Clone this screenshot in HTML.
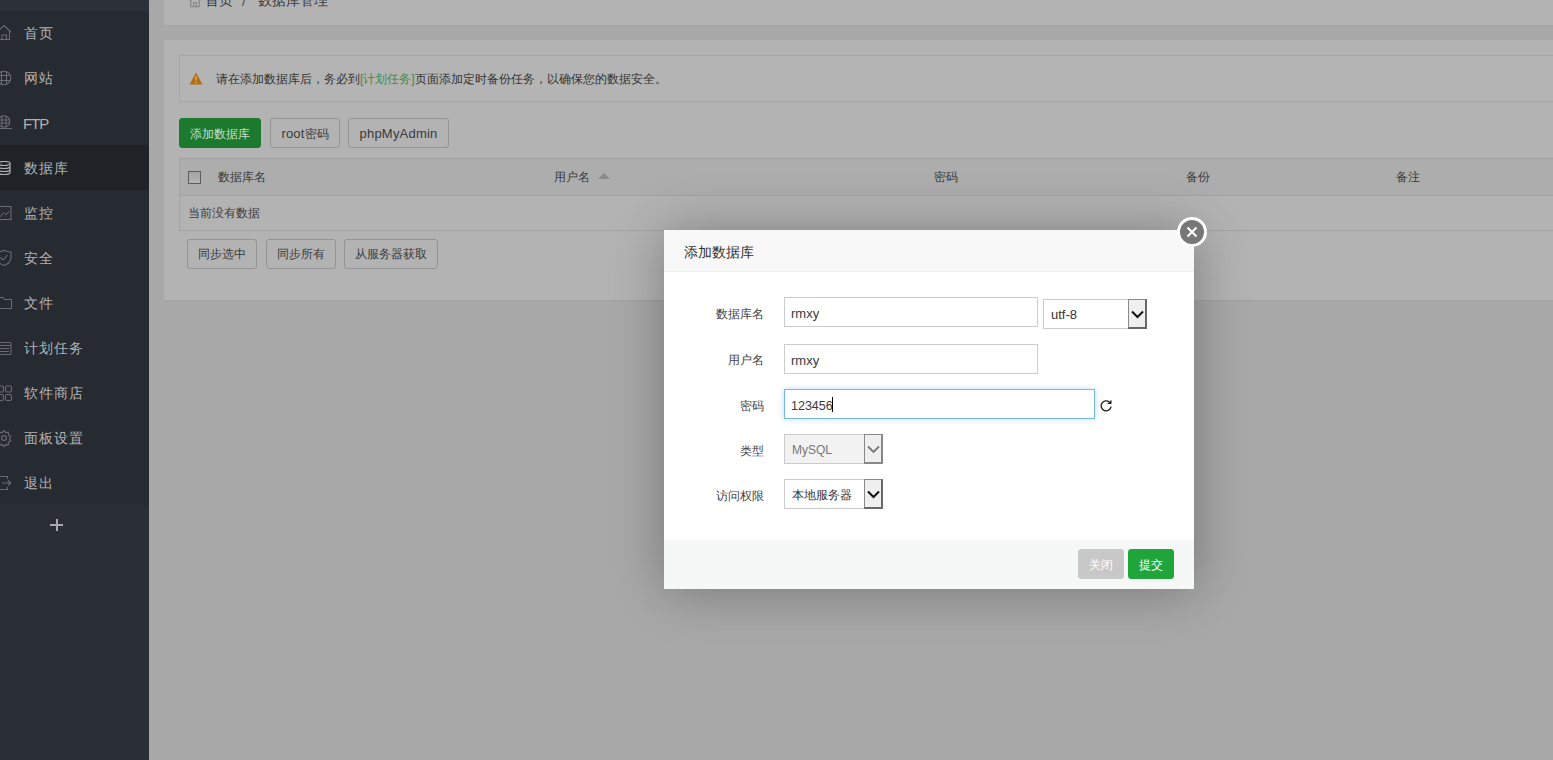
<!DOCTYPE html>
<html><head><meta charset="utf-8">
<style>
*{box-sizing:border-box;margin:0;padding:0}
html,body{width:1553px;height:760px;overflow:hidden}
body{position:relative;background:#a8a8a8;font-family:"Liberation Sans",sans-serif;color:#333}
.abs{position:absolute}
#side{left:0;top:0;width:149px;height:760px;background:#262a31}
#side .top{left:0;top:0;width:149px;height:11px;background:#2c3038}
#side .item{position:absolute;left:0;width:149px;height:45px;color:#b2b2b2;font-size:14px;line-height:45px}
#side .item span{position:absolute;left:24px;top:1px;letter-spacing:0.9px}
#side .item svg{position:absolute;left:-3px;top:15px}
#side .act{background:#1f2227}
#side .plus{left:0;top:505px;width:149px;height:255px;background:#2a2e35}
.box{background:#b3b3b3}
.btn{position:absolute;height:30px;border:1px solid #949494;border-radius:3px;font-size:12px;line-height:30px;text-align:center;color:#3a3a3a;background:#b3b3b3}
.th{position:absolute;top:170px;font-size:12px;color:#3c3c3c;line-height:14px}
#modal{left:664px;top:230px;width:530px;height:359px;background:#fff;box-shadow:1px 1px 50px rgba(0,0,0,.3)}
#modal .title{left:0;top:0;width:530px;height:42px;background:#f8f8f8;border-bottom:1px solid #eee;font-size:14px;color:#333;line-height:44px;padding-left:20px}
.lbl{position:absolute;width:100px;text-align:right;font-size:12px;color:#444;line-height:14px}
.inp{position:absolute;height:30px;border:1px solid #ccc;font-size:13px;line-height:28px;padding-left:6px;color:#3a3a3a;background:#fff}
.sel{position:absolute;height:30px;border:1px solid #ccc;font-size:13px;line-height:28px;padding-left:7px;color:#333;background:#fff}
.sel .arr{position:absolute;right:-1px;top:-1px;width:19px;height:30px;background:#efefef;border:1px solid #8a8a8a;border-right:2px solid #686868;border-bottom:2px solid #686868}
.sel .arr svg{position:absolute;left:2px;top:10px}
#foot{left:0;top:310px;width:530px;height:49px;background:#f6f8f8}
</style></head><body>

<!-- sidebar -->
<div id="side" class="abs">
  <div class="top abs"></div>
  <div class="item" style="top:10px"><span>首页</span></div>
  <div class="item" style="top:55px"><span>网站</span></div>
  <div class="item" style="top:100px"><span style="left:23px;font-size:15px;letter-spacing:-1.1px">FTP</span></div>
  <div class="item act" style="top:145px"><svg style="position:absolute;left:-3px;top:16px" width="14" height="14" viewBox="0 0 14 14" fill="none" stroke="#b0b0b0" stroke-width="1.2"><ellipse cx="7" cy="2.5" rx="6" ry="2"/><path d="M1 2.5V11.5C1 12.6 3.7 13.5 7 13.5S13 12.6 13 11.5V2.5M1 5.5C1 6.6 3.7 7.5 7 7.5S13 6.6 13 5.5M1 8.5C1 9.6 3.7 10.5 7 10.5S13 9.6 13 8.5"/></svg><span>数据库</span></div>
  <div class="item" style="top:190px"><span>监控</span></div>
  <div class="item" style="top:235px"><span>安全</span></div>
  <div class="item" style="top:280px"><span>文件</span></div>
  <div class="item" style="top:325px"><span>计划任务</span></div>
  <div class="item" style="top:370px"><span>软件商店</span></div>
  <div class="item" style="top:415px"><span>面板设置</span></div>
  <div class="item" style="top:460px"><span>退出</span></div>
  <div class="plus abs"></div>
  <svg class="abs" style="left:0;top:0" width="20" height="520" viewBox="0 0 20 520" fill="none" stroke="#686c72" stroke-width="1.1">
    <!-- home -->
    <path d="M-3 32 L4 25.5 L11 32 M-1 30.5 V39.5 H9.5 V30.5 M2 39.5 V35 H6.5 V39.5"/>
    <!-- globe -->
    <circle cx="4" cy="78" r="6.8"/><path d="M-2.5 75.5H10.5M-2.5 80.5H10.5M1.5 71.5V84.5M6.5 71.5V84.5"/>
    <!-- ftp -->
    <circle cx="4" cy="121.5" r="5.8"/><path d="M-1.5 120H9.5M-1.5 123H9.5M2 116V127M6 116V127M-3 128.5H12"/>
    <!-- monitor -->
    <rect x="-2" y="206.5" width="13" height="13"/><path d="M0 217L3.5 212.5L6 215L9 211" stroke-width="1"/>
    <!-- shield -->
    <path d="M4 250.3C6 251.5 8.5 252 11 252V257.5C11 261.5 8 264 4 265.5C0 264 -3 261.5 -3 257.5V252C-0.5 252 2 251.5 4 250.3Z"/><path d="M0.5 257.5L3 260L7.5 255"/>
    <!-- folder -->
    <path d="M-3 297.5H3L4.5 299.5H11.5V308.5H-3Z"/>
    <!-- calendar -->
    <rect x="-2.5" y="342.5" width="13.5" height="12" rx="1"/><path d="M-2.5 345.5H11M-1 348.5H9M-1 351.5H9" stroke-width="1"/>
    <!-- apps -->
    <rect x="-2.5" y="386" width="6" height="6" rx="1.5"/><rect x="5.5" y="386" width="6" height="6" rx="1.5"/><rect x="-2.5" y="394.5" width="6" height="6" rx="1.5"/><rect x="5.5" y="394.5" width="6" height="6" rx="1.5"/>
    <!-- gear -->
    <circle cx="4" cy="438" r="2.4"/><path d="M4 430.5L5.6 432.6L8.3 432.2L8.4 434.9L10.8 436.3L9.5 438.6L10.8 440.9L8.4 442.2L8.3 444.9L5.6 444.6L4 446.6L2.4 444.6L-0.3 444.9L-0.4 442.2L-2.8 440.9L-1.5 438.6L-2.8 436.3L-0.4 434.9L-0.3 432.2L2.4 432.6Z"/>
    <!-- exit -->
    <path d="M7.5 479V476.5H-3V489.5H7.5V487M2 483H10.5M8 480.5L10.8 483L8 485.5"/>
  </svg>

  <div class="abs" style="left:50px;top:519px;width:14px;height:14px"><div class="abs" style="left:0;top:5px;width:13px;height:2px;background:#a9abae"></div><div class="abs" style="left:5.5px;top:0;width:2px;height:12px;background:#a9abae"></div></div>
</div>

<!-- breadcrumb -->
<div class="abs box" style="left:164px;top:-15px;width:1389px;height:41px;border-bottom:1px solid #a3a3a3"></div>
<div class="abs" style="left:189px;top:-8px;font-size:14px;color:#3a3a3a;line-height:16px;white-space:nowrap">
  <svg class="abs" style="left:0;top:2px" width="13" height="14" viewBox="0 0 13 14" fill="none" stroke="#8a8a8a" stroke-width="1.3"><path d="M0.5 6.5L6 1L11.5 6.5M1.8 5.5V12.6H10.2V5.5M4.6 12.6V8.6H7.4V12.6"/></svg>
  <span class="abs" style="left:16px;top:0">首页</span>
  <span class="abs" style="left:53px;top:1px;color:#555;font-size:15px">/</span>
  <span class="abs" style="left:69px;top:0">数据库管理</span>
</div>

<!-- content box -->
<div class="abs box" style="left:164px;top:40px;width:1389px;height:260px;box-shadow:0 1px 0 #a2a2a2"></div>
<div class="abs" style="left:179px;top:55px;width:1380px;height:47px;border:1px solid #a6a6a6;background:#b4b4b4"></div>
<svg class="abs" style="left:189px;top:72px" width="14" height="13" viewBox="0 0 14 13"><path d="M7 0.5L13.5 12.5H0.5Z" fill="#b46e12"/><path d="M7 4V8.5" stroke="#d9a860" stroke-width="1.6"/><circle cx="7" cy="10.5" r="0.9" fill="#d9a860"/></svg>
<div class="abs" style="left:216px;top:72px;font-size:12px;line-height:14px;color:#333;white-space:nowrap">请在添加数据库后，务必到<span style="color:#3d8a4a">[计划任务]</span>页面添加定时备份任务，以确保您的数据安全。</div>

<div class="btn" style="left:179px;top:118px;width:82px;background:#1c7a2e;border-color:#1c7a2e;color:#c6dfca">添加数据库</div>
<div class="btn" style="left:270px;top:118px;width:70px"><span style="font-size:13px;letter-spacing:.2px">root</span>密码</div>
<div class="btn" style="left:348px;top:118px;width:101px"><span style="font-size:13px;letter-spacing:.2px">phpMyAdmin</span></div>

<!-- table -->
<div class="abs" style="left:179px;top:158px;width:1374px;height:73px;border:1px solid #a3a3a3;border-right:none;background:#b3b3b3"></div>
<div class="abs" style="left:180px;top:159px;width:1373px;height:37px;background:#adadad;border-bottom:1px solid #a3a3a3"></div>
<div class="abs" style="left:188px;top:171px;width:13px;height:13px;border:1px solid #5c5c5c;background:linear-gradient(#a2a2a2,#b6b6b6)"></div>
<div class="th" style="left:218px">数据库名</div>
<div class="th" style="left:554px">用户名</div>
<svg class="abs" style="left:598px;top:172px" width="12" height="8" viewBox="0 0 12 8"><path d="M0 7L6 1L12 7Z" fill="#8a8a8a"/></svg>
<div class="th" style="left:934px">密码</div>
<div class="th" style="left:1186px">备份</div>
<div class="th" style="left:1396px">备注</div>
<div class="abs" style="left:188px;top:206px;font-size:12px;line-height:14px;color:#3c3c3c">当前没有数据</div>

<div class="btn" style="left:187px;top:239px;width:70px;height:30px;line-height:28px">同步选中</div>
<div class="btn" style="left:266px;top:239px;width:70px;height:30px;line-height:28px">同步所有</div>
<div class="btn" style="left:344px;top:239px;width:94px;height:30px;line-height:28px">从服务器获取</div>

<!-- modal -->
<div id="modal" class="abs">
  <div class="title abs">添加数据库</div>
  <div class="lbl" style="left:0;top:77px;width:100px">数据库名</div>
  <div class="inp" style="left:120px;top:67px;width:254px;padding-top:2px">rmxy</div>
  <div class="sel" style="left:379px;top:69px;width:104px;padding-top:1px">utf-8<div class="arr"><svg width="13" height="9" viewBox="0 0 13 9" fill="none" stroke="#111" stroke-width="2"><path d="M1 1.5L6.5 7L12 1.5"/></svg></div></div>
  <div class="lbl" style="left:0;top:123px;width:100px">用户名</div>
  <div class="inp" style="left:120px;top:114px;width:254px;padding-top:2px">rmxy</div>
  <div class="lbl" style="left:0;top:169px;width:100px">密码</div>
  <div class="inp" style="left:120px;top:159px;width:311px;padding-top:2px;border-color:#74b6e6;box-shadow:0 0 6px rgba(120,190,240,.5)"><span style="font-size:12.5px">123456</span></div>
  <div class="abs" style="left:168px;top:167px;width:1px;height:15px;background:#000"></div>
  <svg class="abs" style="left:436px;top:170px" width="13" height="13" viewBox="0 0 13 13" fill="none" stroke="#222" stroke-width="1.35"><path d="M11.1 6.7A5 5 0 1 1 9.4 2.0"/><path d="M11.5 -0.2L11.5 4.1L7.2 4.1Z" fill="#222" stroke="none"/></svg>
  <div class="lbl" style="left:0;top:214px;width:100px">类型</div>
  <div class="sel" style="left:120px;top:204px;width:99px;background:#f2f2f2;color:#777;font-size:12px;padding-top:1px">MySQL<div class="arr" style="border-color:#888"><svg width="13" height="9" viewBox="0 0 13 9" fill="none" stroke="#777" stroke-width="1.8"><path d="M1 1.5L6.5 7L12 1.5"/></svg></div></div>
  <div class="lbl" style="left:0;top:259px;width:100px">访问权限</div>
  <div class="sel" style="left:120px;top:249px;width:99px;font-size:12px;padding-top:1px">本地服务器<div class="arr"><svg width="13" height="9" viewBox="0 0 13 9" fill="none" stroke="#111" stroke-width="2"><path d="M1 1.5L6.5 7L12 1.5"/></svg></div></div>
  <div id="foot" class="abs"></div>
  <div class="btn" style="left:414px;top:319px;width:46px;background:#c8c8c8;border-color:#c8c8c8;color:#fff">关闭</div>
  <div class="btn" style="left:464px;top:319px;width:46px;background:#20a53a;border-color:#20a53a;color:#fff">提交</div>
</div>
<!-- close circle -->
<div class="abs" style="left:1177px;top:217px;width:30px;height:30px;border-radius:50%;background:#fff"></div>
<div class="abs" style="left:1180px;top:220px;width:24px;height:24px;border-radius:50%;background:#777"></div>
<svg class="abs" style="left:1185px;top:225px" width="14" height="14" viewBox="0 0 14 14" stroke="#fff" stroke-width="2.2"><path d="M2.5 2.5L11.5 11.5M11.5 2.5L2.5 11.5"/></svg>

</body></html>
